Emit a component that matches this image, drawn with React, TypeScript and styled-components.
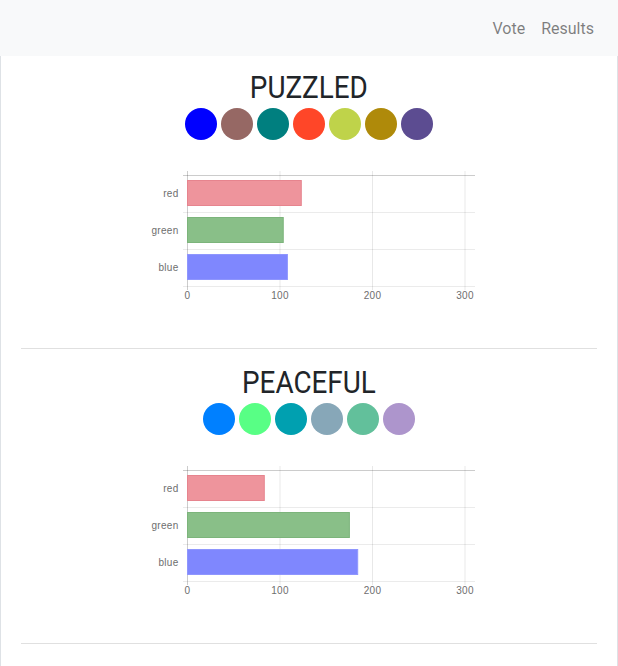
import React from "react";
import styled, { createGlobalStyle } from "styled-components";

const GlobalStyle = createGlobalStyle`
  html, body { margin: 0; padding: 0; background: #fff; }
  body { font-family: Roboto, "Noto Sans", sans-serif; color: #212529; }
`;

const Navbar = styled.nav`
  height: 56px;
  background: #f8f9fa;
  display: flex;
  justify-content: flex-end;
  align-items: center;
  padding: 2px 16px 0;
  box-sizing: border-box;
`;

const NavLink = styled.a`
  padding: 0 8px;
  font-size: 16px;
  line-height: 24px;
  color: rgba(0, 0, 0, 0.5);
  text-decoration: none;
  cursor: pointer;
`;

const Main = styled.main`
  border-left: 1px solid #dee2e6;
  border-right: 1px solid #dee2e6;
  padding: 12px 20px 0;
  min-height: 610px;
  box-sizing: border-box;
`;

const Section = styled.section`
  display: flex;
  flex-direction: column;
  align-items: center;
`;

const Title = styled.h2`
  margin: 0;
  font-size: 32px;
  font-weight: 400;
  line-height: 38px;
  color: #212529;
  transform: scaleX(0.87);
`;

const Swatches = styled.div`
  display: flex;
  margin-top: 2px;
`;

const Swatch = styled.span<{ $color: string }>`
  width: 32px;
  height: 32px;
  border-radius: 50%;
  margin: 0 2px;
  background: ${(p) => p.$color};
`;

const ChartSvg = styled.svg`
  display: block;
  margin-top: 20px;
  font-family: "Liberation Sans", Arial, sans-serif;
`;

const Rule = styled.hr`
  align-self: stretch;
  border: 0;
  border-top: 1px solid rgba(0, 0, 0, 0.12);
  margin: 38px 0 14px;
`;

type Mood = { name: string; colors: string[]; values: [number, number, number] };

const moods: Mood[] = [
  {
    name: "PUZZLED",
    colors: ["#0000ff", "#966864", "#007f7f", "#ff4628", "#bfd34a", "#af8a0a", "#5c4c91"],
    values: [123, 103.5, 108],
  },
  {
    name: "PEACEFUL",
    colors: ["#0080ff", "#58ff85", "#00a0b0", "#87a7b8", "#62c09b", "#ad95cc"],
    values: [83, 175, 184],
  },
];

const bars = [
  { label: "red", fill: "#ee949c", stroke: "#e6848e" },
  { label: "green", fill: "#89bf88", stroke: "#7cb47b" },
  { label: "blue", fill: "#7f87fe", stroke: "#8f96fd" },
];

const X0 = 48.5;
const SCALE = 0.925;
const TOP = 15.5;
const ROW = 37;

function BarChart({ values }: { values: number[] }) {
  const xs = [0, 100, 200, 300];
  return (
    <ChartSvg width={340} height={150} viewBox="0 0 340 150">
      {[1, 2, 3].map((i) => (
        <line key={`h${i}`} x1={44} x2={336} y1={TOP + i * ROW} y2={TOP + i * ROW} stroke="rgba(0,0,0,0.08)" />
      ))}
      {xs.slice(1).map((v) => (
        <line key={`v${v}`} x1={X0 + v * SCALE} x2={X0 + v * SCALE} y1={11} y2={130} stroke="rgba(0,0,0,0.09)" />
      ))}
      <line x1={44} x2={336} y1={TOP} y2={TOP} stroke="rgba(0,0,0,0.2)" />
      <line x1={X0} x2={X0} y1={11} y2={130} stroke="rgba(0,0,0,0.2)" />
      {bars.map((b, i) => (
        <g key={b.label}>
          <rect
            x={X0}
            y={TOP + i * ROW + 5}
            width={values[i] * SCALE}
            height={25}
            fill={b.fill}
            stroke={b.stroke}
            strokeWidth={1}
          />
          <text
            x={39.5}
            y={TOP + i * ROW + 18.5}
            textAnchor="end"
            dominantBaseline="middle"
            fontSize={10}
            letterSpacing={0.3}
            fill="#6e6e6e"
          >
            {b.label}
          </text>
        </g>
      ))}
      {xs.map((v) => (
        <text
          key={`t${v}`}
          x={X0 + v * SCALE}
          y={136}
          textAnchor="middle"
          dominantBaseline="middle"
          fontSize={10}
          letterSpacing={0.3}
          fill="#6e6e6e"
        >
          {v}
        </text>
      ))}
    </ChartSvg>
  );
}

export default function App() {
  return (
    <>
      <GlobalStyle />
      <Navbar>
        <NavLink>Vote</NavLink>
        <NavLink>Results</NavLink>
      </Navbar>
      <Main>
        {moods.map((m) => (
          <Section key={m.name}>
            <Title>{m.name}</Title>
            <Swatches>
              {m.colors.map((c) => (
                <Swatch key={c} $color={c} />
              ))}
            </Swatches>
            <BarChart values={m.values} />
            <Rule />
          </Section>
        ))}
      </Main>
    </>
  );
}
